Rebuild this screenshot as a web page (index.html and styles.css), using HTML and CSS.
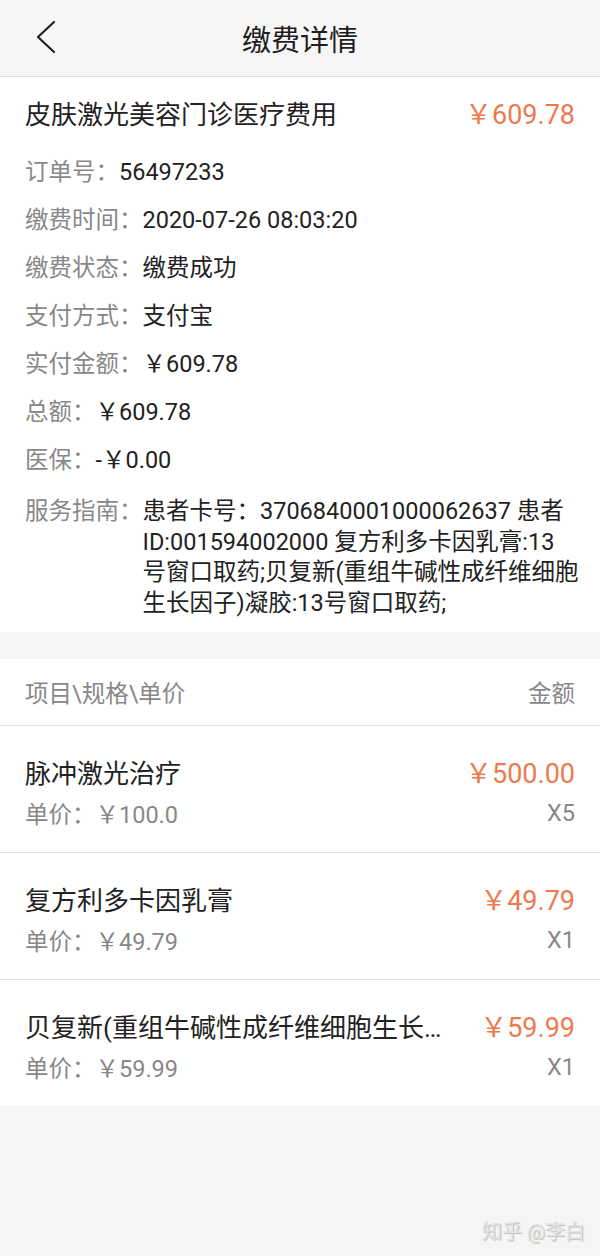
FILE: index.html
```html
<!DOCTYPE html>
<html lang="zh-CN">
<head>
    <meta charset="UTF-8">
    <meta name="viewport" content="width=device-width, initial-scale=1.0">
    <title>缴费详情</title>
    <link rel="stylesheet" href="styles.css">
</head>
<body>
    <header class="topbar">
        <span class="back">
            <svg width="20" height="34" viewBox="0 0 20 34">
                <polyline points="18,2 2,17 18,32" fill="none" stroke="#222" stroke-width="2.2" stroke-linecap="round" stroke-linejoin="round"/>
            </svg>
        </span>
        <span class="topbar-title">缴费详情</span>
    </header>

    <section class="card">
        <div class="card-head">
            <span class="card-name">皮肤激光美容门诊医疗费用</span>
            <span class="price">￥609.78</span>
        </div>
        <div class="info-row"><span class="label">订单号：</span><span class="value">56497233</span></div>
        <div class="info-row"><span class="label">缴费时间：</span><span class="value">2020-07-26 08:03:20</span></div>
        <div class="info-row"><span class="label">缴费状态：</span><span class="value">缴费成功</span></div>
        <div class="info-row"><span class="label">支付方式：</span><span class="value">支付宝</span></div>
        <div class="info-row"><span class="label">实付金额：</span><span class="value">￥609.78</span></div>
        <div class="info-row"><span class="label">总额：</span><span class="value">￥609.78</span></div>
        <div class="info-row"><span class="label">医保：</span><span class="value">-￥0.00</span></div>
        <div class="info-row guide"><span class="label">服务指南：</span><span class="value">患者卡号：3706840001000062637 患者ID:001594002000 复方利多卡因乳膏:13<br>号窗口取药;贝复新(重组牛碱性成纤维细胞生长因子)凝胶:13号窗口取药;</span></div>
    </section>

    <section class="items">
        <div class="items-head">
            <span>项目\规格\单价</span>
            <span>金额</span>
        </div>
        <div class="item">
            <div class="item-line">
                <span class="item-name">脉冲激光治疗</span>
                <span class="price">￥500.00</span>
            </div>
            <div class="item-line sub">
                <span>单价：￥100.0</span>
                <span>X5</span>
            </div>
        </div>
        <div class="item">
            <div class="item-line">
                <span class="item-name">复方利多卡因乳膏</span>
                <span class="price">￥49.79</span>
            </div>
            <div class="item-line sub">
                <span>单价：￥49.79</span>
                <span>X1</span>
            </div>
        </div>
        <div class="item">
            <div class="item-line">
                <span class="item-name">贝复新(重组牛碱性成纤维细胞生长因子)凝胶</span>
                <span class="price">￥59.99</span>
            </div>
            <div class="item-line sub">
                <span>单价：￥59.99</span>
                <span>X1</span>
            </div>
        </div>
    </section>

    <div class="watermark">知乎 @李白</div>
</body>
</html>
```

FILE: styles.css
```css
html {
    background-color: #f5f5f5;
}

body {
    font-family: Roboto, "Noto Sans CJK SC", sans-serif;
    color: #222;
    margin: 0;
    padding: 0;
    min-height: 1256px;
}

.topbar {
    height: 76px;
    background-color: #f6f6f6;
    border-bottom: 1px solid #dedede;
    display: flex;
    align-items: center;
    justify-content: center;
    position: relative;
}

.back {
    position: absolute;
    left: 36px;
    top: 20px;
    line-height: 0;
}

.topbar-title {
    font-size: 29px;
    color: #1e1e1e;
}

.card {
    background: white;
    padding: 0 25px 2px;
}

.card-head {
    height: 71px;
    display: flex;
    justify-content: space-between;
    align-items: center;
    font-size: 26px;
}

.price {
    color: #ec7a4f;
    font-size: 27px;
    white-space: nowrap;
}

.info-row {
    display: flex;
    padding: 12px 0;
    font-size: 23.5px;
    line-height: 24px;
}

.label {
    color: #888;
    white-space: nowrap;
}

.value {
    color: #222;
}

.guide {
    line-height: 30.5px;
    margin-right: -8px;
}

.items {
    margin-top: 27px;
    background: white;
}

.items-head {
    height: 66px;
    padding: 0 25px;
    border-bottom: 1px solid #e3e3e3;
    display: flex;
    justify-content: space-between;
    align-items: center;
    font-size: 23.5px;
    color: #888;
}

.item {
    padding: 30px 25px 24px;
    border-bottom: 1px solid #e3e3e3;
}

.item:last-child {
    border-bottom: none;
}

.item-line {
    display: flex;
    justify-content: space-between;
    align-items: center;
    gap: 30px;
    height: 30px;
    font-size: 26px;
}

.item-name {
    min-width: 0;
    white-space: nowrap;
    overflow: hidden;
    text-overflow: ellipsis;
}

.item-line.sub {
    margin-top: 12px;
    font-size: 23.5px;
    color: #888;
}

.watermark {
    margin-top: 110px;
    padding-right: 15px;
    text-align: right;
    font-size: 20px;
    color: #e2e2e2;
    text-shadow: 1px 1px 1px #bbb;
}
```
